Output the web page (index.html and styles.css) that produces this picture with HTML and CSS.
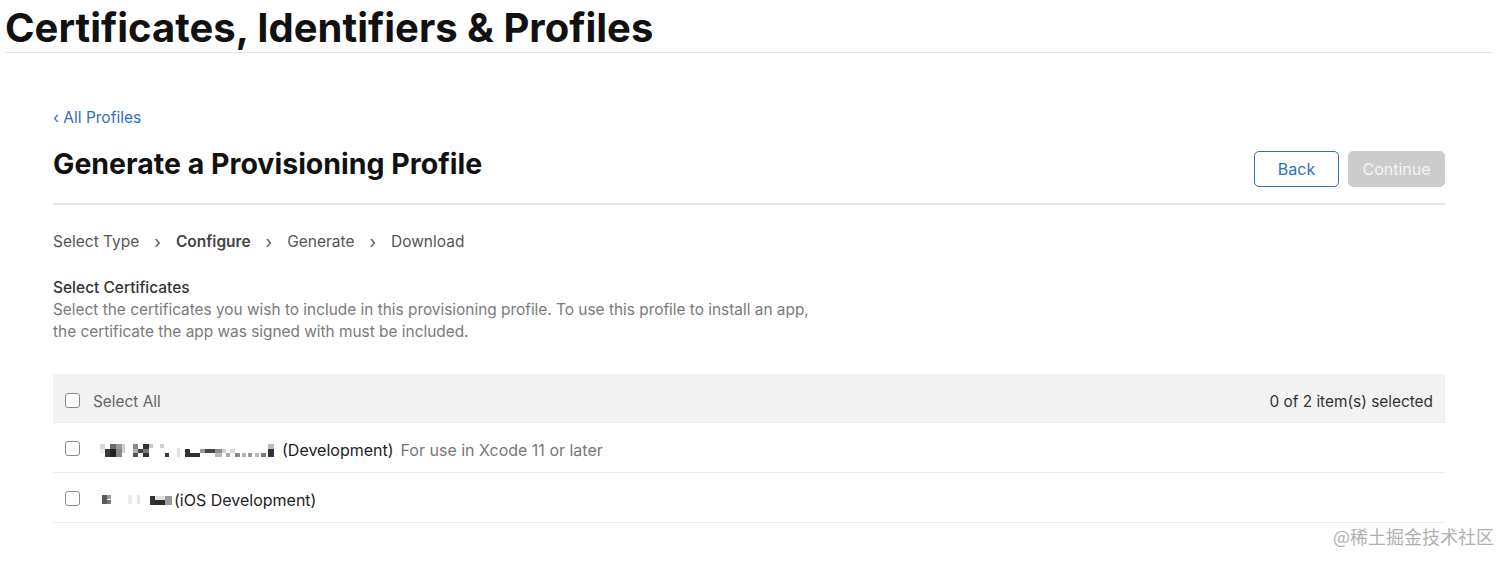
FILE: index.html
```html
<!DOCTYPE html>
<html lang="en">
<head>
<meta charset="utf-8">
<title>Certificates, Identifiers &amp; Profiles</title>
<link rel="stylesheet" href="styles.css">
</head>
<body>
<header class="top">
  <h1 class="top-title">Certificates, Identifiers &amp; Profiles</h1>
</header>
<main class="page">
  <a class="back-link" href="#">‹ All Profiles</a>
  <div class="title-row">
    <h2 class="page-title">Generate a Provisioning Profile</h2>
    <div class="actions">
      <button class="btn btn-back">Back</button>
      <button class="btn btn-continue" disabled>Continue</button>
    </div>
  </div>
  <nav class="steps">
    <span class="step">Select Type</span>
    <span class="chev">›</span>
    <span class="step step-active">Configure</span>
    <span class="chev">›</span>
    <span class="step">Generate</span>
    <span class="chev">›</span>
    <span class="step">Download</span>
  </nav>
  <section class="intro">
    <h3 class="intro-title">Select Certificates</h3>
    <p class="intro-text">Select the certificates you wish to include in this provisioning profile. To use this profile to install an app,<br>the certificate the app was signed with must be included.</p>
  </section>
  <div class="table">
    <div class="table-head">
      <label class="check-label"><span class="box"></span><span class="head-text">Select All</span></label>
      <span class="count">0 of 2 item(s) selected</span>
    </div>
    <div class="row">
      <span class="box"></span>
      <svg class="redact redact-a" width="176" height="16" viewBox="0 0 176 16" aria-hidden="true">
        <rect x="0" y="2" width="5" height="5" fill="#d6d6d6"/>
        <rect x="0" y="7" width="5" height="4" fill="#eeeeee"/>
        <rect x="5" y="7" width="5" height="8" fill="#3a3a3a"/>
        <rect x="10" y="2" width="6" height="5" fill="#6a6a6a"/>
        <rect x="10" y="7" width="6" height="8" fill="#222"/>
        <rect x="16" y="2" width="6" height="5" fill="#9a9a9a"/>
        <rect x="16" y="7" width="6" height="8" fill="#888"/>
        <rect x="22" y="2" width="3" height="9" fill="#cfcfcf"/>
        <rect x="33" y="2" width="5" height="5" fill="#8a8a8a"/>
        <rect x="33" y="7" width="5" height="4" fill="#b0b0b0"/>
        <rect x="33" y="11" width="5" height="4" fill="#555"/>
        <rect x="38" y="7" width="5" height="4" fill="#444"/>
        <rect x="43" y="2" width="6" height="5" fill="#333"/>
        <rect x="43" y="7" width="6" height="4" fill="#777"/>
        <rect x="43" y="11" width="6" height="4" fill="#333"/>
        <rect x="49" y="2" width="4" height="4" fill="#c8c8c8"/>
        <rect x="60" y="2" width="4" height="4" fill="#d0d0d0"/>
        <rect x="65" y="11" width="4" height="4" fill="#3a3a3a"/>
        <rect x="77" y="6" width="3" height="9" fill="#e2e2e2"/>
        <rect x="85" y="7" width="5" height="8" fill="#333"/>
        <rect x="90" y="11" width="10" height="4" fill="#2f2f2f"/>
        <rect x="100" y="7" width="5" height="4" fill="#9a9a9a"/>
        <rect x="105" y="7" width="10" height="4" fill="#444"/>
        <rect x="115" y="7" width="7" height="4" fill="#8e8e8e"/>
        <rect x="115" y="11" width="7" height="4" fill="#bdbdbd"/>
        <rect x="122" y="7" width="4" height="4" fill="#cfcfcf"/>
        <rect x="126" y="11" width="4" height="4" fill="#a8a8a8"/>
        <rect x="130" y="7" width="5" height="4" fill="#dadada"/>
        <rect x="135" y="11" width="5" height="4" fill="#8a8a8a"/>
        <rect x="142" y="11" width="4" height="4" fill="#b5b5b5"/>
        <rect x="148" y="11" width="4" height="4" fill="#9a9a9a"/>
        <rect x="155" y="11" width="4" height="4" fill="#bbb"/>
        <rect x="161" y="11" width="5" height="4" fill="#7a7a7a"/>
        <rect x="168" y="2" width="6" height="5" fill="#bdbdbd"/>
        <rect x="168" y="7" width="6" height="8" fill="#333"/>
      </svg>
      <span class="row-name">(Development)</span>
      <span class="row-note">For use in Xcode 11 or later</span>
    </div>
    <div class="row">
      <span class="box"></span>
      <svg class="redact redact-b" width="73" height="16" viewBox="0 0 73 16" aria-hidden="true">
        <rect x="2" y="3" width="5" height="9" fill="#5a5a5a"/>
        <rect x="7" y="3" width="4" height="4" fill="#9a9a9a"/>
        <rect x="7" y="8" width="4" height="4" fill="#777"/>
        <rect x="28" y="3" width="4" height="9" fill="#ececec"/>
        <rect x="37" y="3" width="3" height="9" fill="#e6e6e6"/>
        <rect x="50" y="4" width="5" height="9" fill="#333"/>
        <rect x="55" y="8" width="10" height="5" fill="#2a2a2a"/>
        <rect x="55" y="4" width="10" height="4" fill="#dcdcdc"/>
        <rect x="65" y="4" width="7" height="9" fill="#9a9a9a"/>
      </svg>
      <span class="row-name">(iOS Development)</span>
    </div>
  </div>
</main>
<div class="watermark">@稀土掘金技术社区</div>
</body>
</html>
```

FILE: styles.css
```css
* { box-sizing: border-box; }
html, body { margin: 0; padding: 0; background: #fff; }
body {
  font-family: Inter, "Noto Sans", "Liberation Sans", sans-serif;
  color: #1d1d1f;
  width: 1512px;
  height: 563px;
  overflow: hidden;
  position: relative;
}
.top {
  margin: 0 19px 0 5px;
  border-bottom: 1px solid #e3e3e3;
  height: 53px;
  padding-top: 4px;
}
.top-title {
  margin: 0;
  font-size: 40px;
  font-weight: 700;
  letter-spacing: 0;
  line-height: 48px;
  color: #111;
}
.page {
  padding: 0 67px 0 53px;
}
.back-link {
  display: block;
  margin-top: 55px;
  font-size: 15.5px;
  line-height: 20px;
  color: #2f6fc0;
  text-decoration: none;
}
.title-row {
  display: flex;
  justify-content: space-between;
  align-items: flex-start;
  margin-top: 18px;
  padding-bottom: 16px;
  border-bottom: 2px solid #e6e6e6;
}
.page-title {
  margin: 0;
  font-size: 28.5px;
  font-weight: 700;
  line-height: 36px;
  letter-spacing: 0;
  color: #111;
}
.actions {
  display: flex;
  gap: 9px;
  margin-top: 5px;
}
.btn {
  height: 36px;
  border-radius: 5px;
  font-family: inherit;
  font-size: 16px;
  padding: 0;
}
.btn-back {
  width: 85px;
  background: #fff;
  border: 1px solid #2f6fc0;
  color: #2f6fc0;
}
.btn-continue {
  width: 97px;
  background: #cccccc;
  border: 1px solid #cccccc;
  color: #f2f2f2;
}
.steps {
  display: flex;
  align-items: center;
  margin-top: 27px;
  font-size: 15.5px;
  line-height: 20px;
  color: #555;
}
.step-active { font-weight: 600; color: #444; }
.chev {
  margin: 0 15px;
  font-size: 17px;
  color: #555;
}
.intro { margin-top: 26px; }
.intro-title {
  margin: 0;
  font-size: 15.5px;
  font-weight: 500;
  line-height: 20px;
  color: #333;
}
.intro-text {
  margin: 1px 0 0;
  font-size: 15.4px;
  line-height: 22px;
  color: #7a7a7a;
}
.table { margin-top: 31px; }
.table-head {
  display: flex;
  justify-content: space-between;
  align-items: center;
  height: 49px;
  background: #f2f2f2;
  padding: 7px 12px 0 12px;
  border-bottom: 1px solid #ececec;
  font-size: 15.4px;
}
.check-label { display: flex; align-items: center; }
.check-label .box { margin-top: -3px; }
.head-text { color: #666; margin-left: 13px; }
.count { color: #333; }
.box {
  display: inline-block;
  width: 15px;
  height: 15px;
  border: 1.5px solid #8a8a8a;
  border-radius: 3px;
  background: #fff;
  flex: none;
}
.row {
  display: flex;
  align-items: center;
  height: 50px;
  padding: 5px 12px 0;
  border-bottom: 1px solid #ececec;
  font-size: 16px;
}
.row .box { margin-top: -4px; }
.redact {
  display: block;
  flex: none;
  margin-left: 20px;
  margin-right: 6px;
}
.redact-b { margin-right: 1px; }
.row-name { color: #222; }
.row-note { color: #777; margin-left: 7px; }
.watermark {
  position: absolute;
  right: 18px;
  top: 523px;
  font-size: 18px;
  line-height: 26px;
  color: #b0b0b0;
  font-family: "Noto Sans CJK SC", sans-serif;
}
```
